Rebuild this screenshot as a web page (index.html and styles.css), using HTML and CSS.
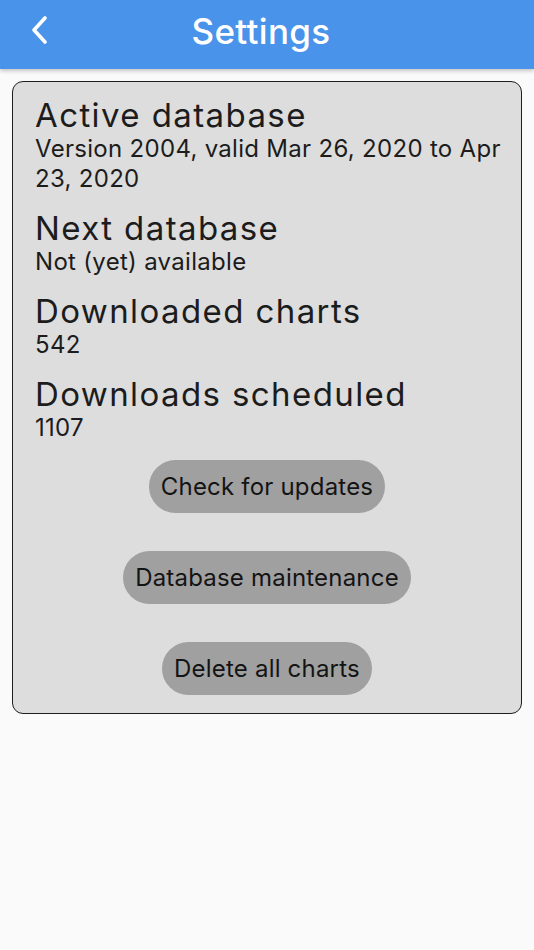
FILE: index.html
```html
<!DOCTYPE html>
<html>
<head>
<meta charset="utf-8">
<link rel="stylesheet" href="styles.css">
</head>
<body>
<header class="appbar">
  <button class="back" aria-label="Back">
    <svg width="18" height="28" viewBox="0 0 18 28"><path d="M15 2 L4 14 L15 26" fill="none" stroke="#fff" stroke-width="3.6" stroke-linecap="round" stroke-linejoin="round"/></svg>
  </button>
  <h1 class="title">Settings</h1>
</header>
<main class="content">
  <section class="card">
    <div class="item">
      <div class="item-title">Active database</div>
      <div class="item-sub">Version 2004, valid Mar 26, 2020 to Apr 23, 2020</div>
    </div>
    <div class="item">
      <div class="item-title">Next database</div>
      <div class="item-sub">Not (yet) available</div>
    </div>
    <div class="item">
      <div class="item-title">Downloaded charts</div>
      <div class="item-sub">542</div>
    </div>
    <div class="item">
      <div class="item-title">Downloads scheduled</div>
      <div class="item-sub">1107</div>
    </div>
    <div class="actions">
      <button class="pill">Check for updates</button>
      <button class="pill">Database maintenance</button>
      <button class="pill">Delete all charts</button>
    </div>
  </section>
</main>
</body>
</html>
```
FILE: styles.css
```css
html, body {
  margin: 0;
  padding: 0;
  background: #fafafa;
  font-family: Inter, "Noto Sans", sans-serif;
  color: #1c1c1c;
}
.appbar {
  height: 69px;
  background: #4a93ea;
  display: flex;
  align-items: center;
  justify-content: center;
  position: relative;
  box-shadow: 0 2px 4px rgba(0,0,0,0.22);
}
.back {
  position: absolute;
  left: 30px;
  top: 15px;
  background: none;
  border: 0;
  padding: 0;
  width: 20px;
  height: 30px;
  display: flex;
  align-items: center;
}
.title {
  margin: -7px 0 0 -12px;
  color: #fff;
  font-weight: 500;
  font-size: 35px;
  letter-spacing: 0.3px;
}
.content {
  padding: 12px 12px;
}
.card {
  background: #dddddd;
  border: 1.5px solid #1e1e1e;
  border-radius: 11px;
  padding: 14px 12px 18px 22px;
}
.item + .item {
  margin-top: 15px;
}
.item-title {
  font-size: 33px;
  line-height: 38px;
  font-weight: 400;
  letter-spacing: 1.4px;
  color: #1c1c1c;
}
.item-sub {
  font-size: 24px;
  line-height: 30px;
  letter-spacing: 0.3px;
  color: #1c1c1c;
}
.actions {
  margin: 17px 10px 0 0;
  display: flex;
  flex-direction: column;
  align-items: center;
  gap: 38px;
}
.pill {
  height: 53px;
  border: 0;
  border-radius: 27px;
  background: #a0a0a0;
  color: #141414;
  font-family: inherit;
  font-size: 24px;
  letter-spacing: 0.2px;
  padding: 0 12px;
}
```
